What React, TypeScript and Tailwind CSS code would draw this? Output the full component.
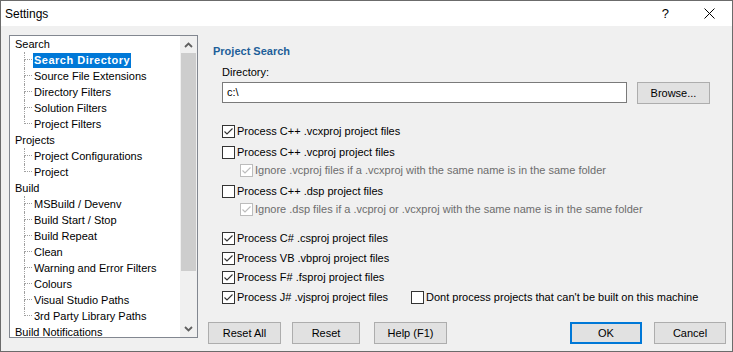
import React from "react";

type TreeGroup = { label: string; children: string[] };

const tree: TreeGroup[] = [
  {
    label: "Search",
    children: ["Search Directory", "Source File Extensions", "Directory Filters", "Solution Filters", "Project Filters"],
  },
  { label: "Projects", children: ["Project Configurations", "Project"] },
  {
    label: "Build",
    children: [
      "MSBuild / Devenv",
      "Build Start / Stop",
      "Build Repeat",
      "Clean",
      "Warning and Error Filters",
      "Colours",
      "Visual Studio Paths",
      "3rd Party Library Paths",
    ],
  },
  { label: "Build Notifications", children: [] },
];

const CheckBox: React.FC<{ checked?: boolean; disabled?: boolean }> = ({ checked, disabled }) => (
  <span
    className={`w-[13px] h-[13px] shrink-0 bg-white border flex items-center justify-center ${
      disabled ? "border-[#bcbcbc]" : "border-[#333333]"
    }`}
  >
    {checked && (
      <svg width="11" height="11" viewBox="0 0 11 11">
        <polyline
          points="1.5,5.5 4,8 9.5,2.5"
          fill="none"
          stroke={disabled ? "#bcbcbc" : "#333333"}
          strokeWidth="1.1"
        />
      </svg>
    )}
  </span>
);

const Check: React.FC<{ label: string; checked?: boolean; disabled?: boolean; className?: string }> = ({
  label,
  checked,
  disabled,
  className = "",
}) => (
  <div className={`flex items-center h-[16px] gap-[2px] ${className}`}>
    <CheckBox checked={checked} disabled={disabled} />
    <span className={`whitespace-nowrap ${disabled ? "text-[#6d6d6d]" : "text-black"}`}>{label}</span>
  </div>
);

const Button: React.FC<{ label: string; className?: string; primary?: boolean }> = ({ label, className = "", primary }) => (
  <button
    className={`h-[22px] bg-[#e1e1e1] text-black text-[11px] flex items-center justify-center ${
      primary ? "border-2 border-[#0078d7]" : "border border-[#adadad]"
    } ${className}`}
  >
    {label}
  </button>
);

const App: React.FC = () => {
  return (
    <div
      className="w-[733px] h-[352px] border border-[#6b6b6b] flex flex-col text-[11px] text-black bg-[#f0f0f0]"
      style={{ fontFamily: '"Liberation Sans", Arial, sans-serif' }}
    >
      <header className="h-[25px] bg-white flex items-center shrink-0">
        <span className="ml-[4px] text-[12px]">Settings</span>
        <span className="ml-auto text-[13px] mr-[35px]">?</span>
        <svg width="11" height="11" viewBox="0 0 11 11" className="mr-[17px]">
          <path d="M0.5 0.5 L10.5 10.5 M10.5 0.5 L0.5 10.5" stroke="#000" strokeWidth="1" />
        </svg>
      </header>

      <div className="flex flex-1">
        {/* tree */}
        <div className="ml-[8px] mt-[9px] w-[189px] h-[303px] border border-[#828790] bg-white flex shrink-0">
          <div className="flex-1 overflow-hidden">
            {tree.map((g) => (
              <div key={g.label}>
                <div className="h-[16px] flex items-center pl-[5px] whitespace-nowrap">{g.label}</div>
                {g.children.map((c, i) => {
                  const last = i === g.children.length - 1;
                  const selected = c === "Search Directory";
                  return (
                    <div key={c} className="h-[16px] flex pl-[5px]">
                      <div className="w-[9px] shrink-0" />
                      <div className="w-[8px] shrink-0 flex flex-col">
                        <div className="h-[8px] border-l border-b border-dotted border-[#a0a0a0]" />
                        <div className={`flex-1 ${last ? "" : "border-l border-dotted border-[#a0a0a0]"}`} />
                      </div>
                      <div className="flex items-center ml-[1px]">
                        <span
                          className={`h-[15px] px-[1px] flex items-center whitespace-nowrap ${
                            selected ? "bg-[#0078d7] text-white font-bold tracking-[0.5px]" : ""
                          }`}
                        >
                          {c}
                        </span>
                      </div>
                    </div>
                  );
                })}
              </div>
            ))}
          </div>
          <div className="w-[17px] bg-[#f0f0f0] flex flex-col shrink-0">
            <div className="h-[17px] flex items-center justify-center">
              <svg width="9" height="6" viewBox="0 0 9 6">
                <polyline points="1,5 4.5,1.5 8,5" fill="none" stroke="#606060" strokeWidth="1.8" />
              </svg>
            </div>
            <div className="h-[218px] mx-[1px] bg-[#cdcdcd]" />
            <div className="flex-1" />
            <div className="h-[17px] flex items-center justify-center">
              <svg width="9" height="6" viewBox="0 0 9 6">
                <polyline points="1,1 4.5,4.5 8,1" fill="none" stroke="#606060" strokeWidth="1.8" />
              </svg>
            </div>
          </div>
        </div>

        {/* right panel */}
        <div className="flex-1 flex flex-col">
          <div className="pl-[15px]">
            <div className="mt-[17px] h-[16px] flex items-center font-bold text-[#1e5f99]">Project Search</div>
            <div className="pl-[9px]">
              <div className="mt-[5px] h-[16px] flex items-center">Directory:</div>
              <div className="mt-[2px] flex">
                <div className="w-[405px] h-[21px] bg-white border border-[#7a7a7a] flex items-center pl-[4px]">c:\</div>
                <Button label="Browse..." className="ml-[10px] w-[73px] h-[21px]" />
              </div>

              <Check className="mt-[19px]" label="Process C++ .vcxproj project files" checked />
              <Check className="mt-[5px]" label="Process C++ .vcproj project files" />
              <Check
                className="mt-[2px] ml-[18px]"
                label="Ignore .vcproj files if a .vcxproj with the same name is in the same folder"
                checked
                disabled
              />
              <Check className="mt-[5px]" label="Process C++ .dsp project files" />
              <Check
                className="mt-[2px] ml-[18px]"
                label="Ignore .dsp files if a .vcproj or .vcxproj with the same name is in the same folder"
                checked
                disabled
              />
              <Check className="mt-[13px]" label="Process C# .csproj project files" checked />
              <Check className="mt-[4px]" label="Process VB .vbproj project files" checked />
              <Check className="mt-[3px]" label="Process F# .fsproj project files" checked />
              <div className="mt-[4px] flex">
                <Check className="w-[189px]" label="Process J# .vjsproj project files" checked />
                <Check label="Dont process projects that can't be built on this machine" />
              </div>
            </div>
          </div>

          <div className="mt-[17px] flex pl-[10px] pr-[6px]">
            <Button label="Reset All" className="w-[73px]" />
            <Button label="Reset" className="ml-[11px] w-[68px]" />
            <Button label="Help (F1)" className="ml-[14px] w-[73px]" />
            <Button label="OK" primary className="ml-auto w-[72px]" />
            <Button label="Cancel" className="ml-[12px] w-[72px]" />
          </div>
        </div>
      </div>
    </div>
  );
};

export default App;
